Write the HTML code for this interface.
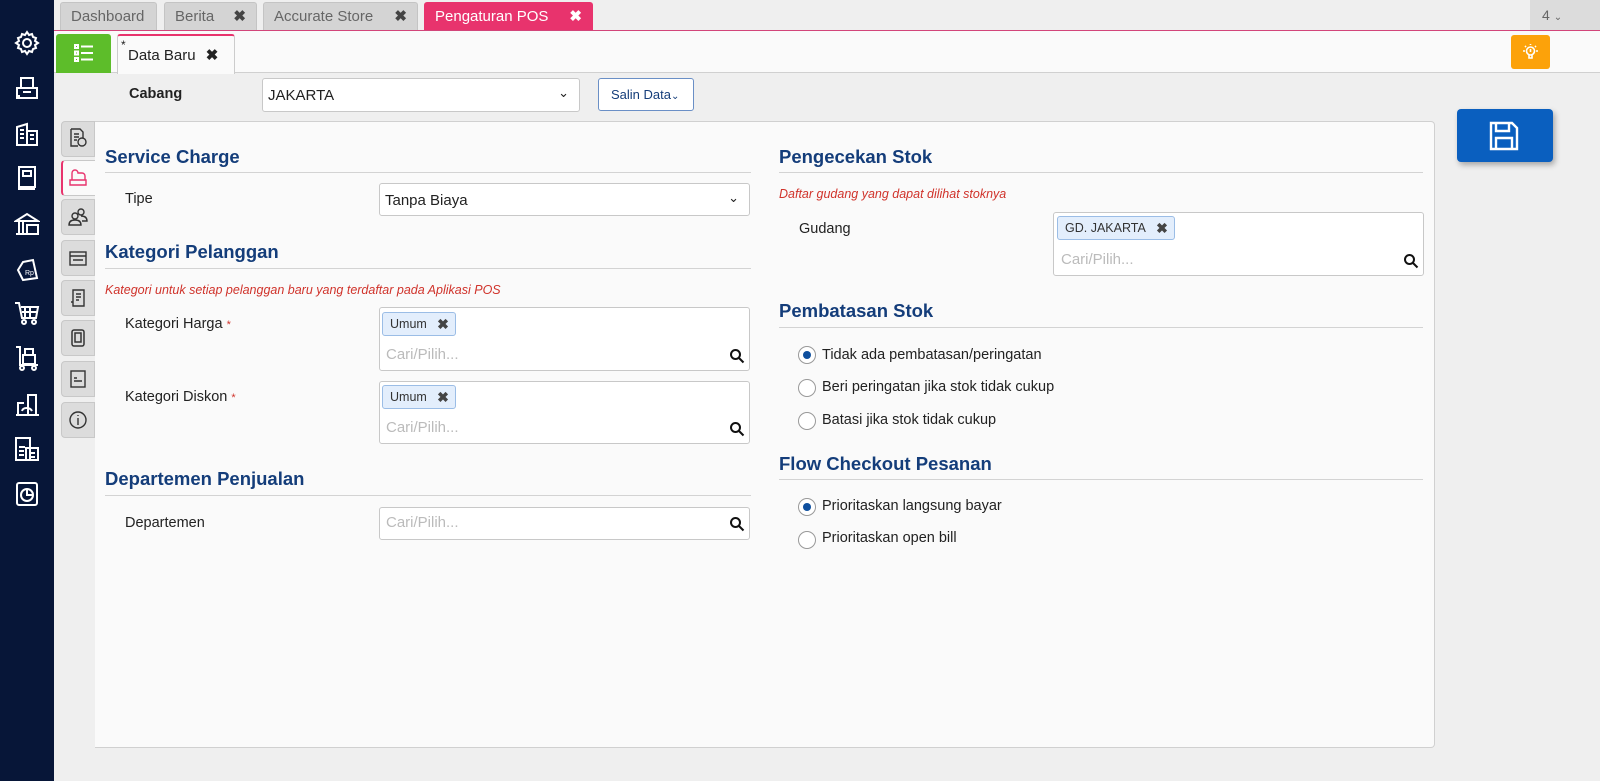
<!DOCTYPE html>
<html><head><meta charset="utf-8"><style>
*{box-sizing:border-box;margin:0;padding:0}
body{width:1600px;height:781px;overflow:hidden;background:#efefef;font-family:"Liberation Sans",sans-serif;position:relative;color:#222}
.a{position:absolute}
#side{left:0;top:0;width:54px;height:781px;background:#071638}
.si{position:absolute;left:14px;width:26px;height:26px}
.tab{position:absolute;top:2px;height:28px;background:#d4d4d4;border:1px solid #c4c4c4;border-bottom:none;border-radius:3px 3px 0 0;color:#666;font-size:15px;line-height:28px;padding-left:10px}
.x{position:absolute;right:10px;top:0;font-weight:bold;color:#444;font-size:15px}
.h{position:absolute;color:#143d7a;font-size:18.5px;font-weight:bold}
.hr{position:absolute;height:1px;background:#d3d3d3}
.lbl{position:absolute;font-size:14.5px;color:#222}
.inp{position:absolute;background:#fff;border:1px solid #c8c8c8;border-radius:3px}
.ph{position:absolute;color:#bbb;font-size:15px}
.chip{position:absolute;background:#e3eefc;border:1px solid #9bbde6;border-radius:3px;font-size:12.5px;color:#333;height:24px;line-height:22px;padding:0 28px 0 7px}
.chip b{position:absolute;right:6px;top:0;color:#444;font-size:14px}
.note{position:absolute;color:#d0332b;font-style:italic;font-size:12.5px}
.vt{position:absolute;left:61px;width:34px;height:36px;background:#dcdcdc;border:1px solid #c8c8c8;border-radius:4px 0 0 4px}
.rad{position:absolute;width:18px;height:18px;border:1px solid #999;border-radius:50%;background:#fff}
.rad.on::after{content:"";position:absolute;left:4px;top:4px;width:8px;height:8px;border-radius:50%;background:#0e4f9e}
.rl{position:absolute;font-size:14.5px;color:#222}
.mag{position:absolute;width:16px;height:16px}
</style></head><body>
<div id="side" class="a">
<svg class="si" style="top:30px" viewBox="0 0 26 26" fill="none" stroke="#fff" stroke-width="2"><circle cx="13" cy="13" r="4"/><path d="M13 2l2 3 3-1 1 3 3 1-1 3 3 2-3 2 1 3-3 1-1 3-3-1-2 3-2-3-3 1-1-3-3-1 1-3-3-2 3-2-1-3 3-1 1-3 3 1z"/></svg>
<svg class="si" style="top:75px" viewBox="0 0 26 26" fill="none" stroke="#fff" stroke-width="2"><rect x="3" y="13" width="20" height="10"/><rect x="7" y="3" width="12" height="10"/><path d="M9 17h8M5 23v-3"/></svg>
<svg class="si" style="top:121px" viewBox="0 0 26 26" fill="none" stroke="#fff" stroke-width="2"><path d="M3 24V6l10-3v21M13 10h10v14M2 24h22M6 9h4M6 13h4M6 17h4M16 14h4M16 18h4"/></svg>
<svg class="si" style="top:165px" viewBox="0 0 26 26" fill="none" stroke="#fff" stroke-width="2"><rect x="5" y="2" width="16" height="20"/><path d="M5 22v2h16M9 6h8v5H9z"/></svg>
<svg class="si" style="top:211px" viewBox="0 0 26 26" fill="none" stroke="#fff" stroke-width="2"><path d="M2 10l11-7 11 7zM5 10v12M9 10v12M2 23h12"/><rect x="13" y="14" width="11" height="9"/></svg>
<svg class="si" style="top:256px" viewBox="0 0 26 26" fill="none" stroke="#fff" stroke-width="2"><path d="M9 6l10-2 4 18-14 2-5-10z"/><text x="11" y="19" font-size="7" fill="#fff" stroke="none">Rp</text></svg>
<svg class="si" style="top:300px" viewBox="0 0 26 26" fill="none" stroke="#fff" stroke-width="2"><path d="M1 3h4l3 15h14l2-11H7M11 8v10M16 8v10M8 12h15"/><circle cx="10" cy="22" r="2"/><circle cx="20" cy="22" r="2"/></svg>
<svg class="si" style="top:345px" viewBox="0 0 26 26" fill="none" stroke="#fff" stroke-width="2"><path d="M2 2h4v18h18"/><rect x="9" y="10" width="12" height="9"/><rect x="11" y="4" width="8" height="6"/><circle cx="8" cy="23" r="2"/><circle cx="20" cy="23" r="2"/></svg>
<svg class="si" style="top:391px" viewBox="0 0 26 26" fill="none" stroke="#fff" stroke-width="2"><path d="M2 24h23M4 24V12h6M14 24V4h8v20M8 20c1-4 8-4 10 0"/></svg>
<svg class="si" style="top:436px" viewBox="0 0 26 26" fill="none" stroke="#fff" stroke-width="2"><rect x="2" y="2" width="14" height="22"/><rect x="12" y="12" width="12" height="12"/><path d="M5 11h6M5 15h5M5 19h5M15 17h6M15 21h6"/></svg>
<svg class="si" style="top:481px" viewBox="0 0 26 26" fill="none" stroke="#fff" stroke-width="2"><rect x="3" y="2" width="20" height="22" rx="2"/><circle cx="13" cy="14" r="6"/><path d="M13 8v6h6"/></svg>
</div>
<!-- top tabs -->
<div class="tab" style="left:60px;width:97px">Dashboard</div>
<div class="tab" style="left:164px;width:93px">Berita<span class="x">✖</span></div>
<div class="tab" style="left:263px;width:155px">Accurate Store<span class="x">✖</span></div>
<div class="tab" style="left:424px;width:169px;background:#e8336d;border-color:#e8336d;color:#fff">Pengaturan POS<span class="x" style="color:#fff">✖</span></div>
<div class="a" style="left:1530px;top:0;width:70px;height:31px;background:#dcdcdc;color:#666;font-size:14px;line-height:31px;padding-left:12px">4 <span style="font-size:10px">⌄</span></div>
<div class="a" style="left:54px;top:30px;width:1546px;height:1px;background:#d2457a"></div>
<div class="a" style="left:54px;top:31px;width:1546px;height:42px;background:#fafafa;border-bottom:1px solid #d0d0d0"></div>
<div class="a" style="left:56px;top:34px;width:55px;height:39px;background:#5dbd2a;border-radius:3px 3px 0 0"></div>
<svg class="a" style="left:74px;top:44px" width="20" height="18" viewBox="0 0 20 18" fill="none" stroke="#fff" stroke-width="2"><rect x="1" y="1" width="3" height="3"/><rect x="1" y="7.5" width="3" height="3"/><rect x="1" y="14" width="3" height="3"/><path d="M7 2.5h12M7 9h12M7 15.5h12"/></svg>
<div class="a" style="left:117px;top:34px;width:118px;height:40px;background:#fafafa;border:1px solid #ccc;border-top:2px solid #e8336d;border-bottom:none;border-radius:3px 3px 0 0;font-size:15px;padding:10px 0 0 10px">Data Baru <b style="margin-left:6px">✖</b><span class="a" style="left:3px;top:2px;font-size:12px">*</span></div>
<div class="a" style="left:1511px;top:35px;width:39px;height:34px;background:#fca20a;border-radius:3px"></div>
<svg class="a" style="left:1522px;top:43px" width="17" height="18" viewBox="0 0 17 18" fill="none" stroke="#fff" stroke-width="1.6"><circle cx="8.5" cy="8" r="4"/><path d="M7 12v3h3v-3M8.5 6v3M1 8h2M14 8h2M3 3l1 1M14 3l-1 1M8.5 1v1"/></svg>
<!-- cabang -->
<div class="lbl" style="left:129px;top:86px;font-weight:bold">Cabang</div>
<div class="inp" style="left:262px;top:78px;width:318px;height:34px;font-size:15px;padding:8px 0 0 5px">JAKARTA<span class="a" style="right:10px;top:6px;font-size:13px">⌄</span></div>
<div class="inp" style="left:598px;top:78px;width:96px;height:33px;border-color:#6a8fc6;color:#143d7a;font-size:13px;padding:8px 0 0 12px">Salin Data<span style="font-size:10px">⌄</span></div>
<!-- save -->
<div class="a" style="left:1457px;top:109px;width:96px;height:53px;background:#0a5fbf;border-radius:4px;box-shadow:2px 3px 6px rgba(0,0,0,.3)"></div>
<svg class="a" style="left:1488px;top:120px" width="32" height="32" viewBox="0 0 32 32" fill="none" stroke="#fff" stroke-width="2.4"><path d="M3 3h21l5 5v21H3z"/><path d="M8 3v8h13V3M8 29V18h16v11"/></svg>
<!-- vtabs -->
<div class="vt" style="top:121px"></div>
<div class="vt" style="top:160px;background:#fafafa;border-left:2px solid #e8336d;border-right:none"></div>
<div class="vt" style="top:199px"></div>
<div class="vt" style="top:240px"></div>
<div class="vt" style="top:280px"></div>
<div class="vt" style="top:320px"></div>
<div class="vt" style="top:361px"></div>
<div class="vt" style="top:402px"></div>
<svg class="a" style="left:68px;top:128px" width="20" height="20" viewBox="0 0 20 20" fill="none" stroke="#333" stroke-width="1.4"><path d="M3 1h9l3 3v6M3 1v17h7"/><circle cx="14" cy="14" r="4"/><path d="M6 6h5M6 9h5M6 12h3"/></svg>
<svg class="a" style="left:68px;top:168px" width="20" height="20" viewBox="0 0 20 20" fill="none" stroke="#e8336d" stroke-width="1.4"><path d="M4 12V5a3 3 0 0 1 6 0h4a3 3 0 0 1 3 3v4M2 12h16v5H2z"/></svg>
<svg class="a" style="left:68px;top:207px" width="20" height="20" viewBox="0 0 20 20" fill="none" stroke="#333" stroke-width="1.4"><circle cx="7" cy="9" r="3"/><circle cx="13" cy="5" r="3"/><path d="M1 18c0-4 3-5 6-5s6 1 6 5zM13 9c3 0 6 1 6 5h-5"/></svg>
<svg class="a" style="left:68px;top:248px" width="20" height="20" viewBox="0 0 20 20" fill="none" stroke="#333" stroke-width="1.4"><rect x="2" y="4" width="16" height="13"/><path d="M2 8h16M5 12h10"/></svg>
<svg class="a" style="left:68px;top:288px" width="20" height="20" viewBox="0 0 20 20" fill="none" stroke="#333" stroke-width="1.4"><path d="M5 2h11v16H5zM3 14h2M8 6h5M8 9h5M8 12h3"/></svg>
<svg class="a" style="left:68px;top:328px" width="20" height="20" viewBox="0 0 20 20" fill="none" stroke="#333" stroke-width="1.5"><rect x="4" y="2" width="12" height="16" rx="2"/><path d="M7 5h6v9H7z"/></svg>
<svg class="a" style="left:68px;top:369px" width="20" height="20" viewBox="0 0 20 20" fill="none" stroke="#333" stroke-width="1.4"><rect x="3" y="2" width="14" height="16"/><path d="M6 12h8M6 9h3"/></svg>
<svg class="a" style="left:68px;top:410px" width="20" height="20" viewBox="0 0 20 20" fill="none" stroke="#333" stroke-width="1.4"><circle cx="10" cy="10" r="8"/><path d="M10 8v7M10 5v1"/></svg>
<!-- panel -->
<div class="a" style="left:95px;top:121px;width:1340px;height:627px;background:#fafafa;border:1px solid #d0d0d0;border-left:none;border-radius:0 4px 4px 0"></div>
<!-- left column -->
<div class="h" style="left:105px;top:146px">Service Charge</div>
<div class="hr" style="left:105px;top:172px;width:646px"></div>
<div class="lbl" style="left:125px;top:191px">Tipe</div>
<div class="inp" style="left:379px;top:183px;width:371px;height:33px;font-size:15px;padding:8px 0 0 5px">Tanpa Biaya<span class="a" style="right:10px;top:6px;font-size:13px">⌄</span></div>
<div class="h" style="left:105px;top:241px">Kategori Pelanggan</div>
<div class="hr" style="left:105px;top:268px;width:646px"></div>
<div class="note" style="left:105px;top:283px">Kategori untuk setiap pelanggan baru yang terdaftar pada Aplikasi POS</div>
<div class="lbl" style="left:125px;top:316px">Kategori Harga <span style="color:#d0332b;font-size:11px">*</span></div>
<div class="inp" style="left:379px;top:307px;width:371px;height:64px"></div>
<div class="chip" style="left:382px;top:312px">Umum<b>✖</b></div>
<div class="ph" style="left:386px;top:346px">Cari/Pilih...</div>
<svg class="mag" style="left:729px;top:348px" viewBox="0 0 16 16" fill="none" stroke="#111" stroke-width="2"><circle cx="6.5" cy="6.5" r="4.5"/><path d="M10 10l4.5 4.5"/></svg>
<div class="lbl" style="left:125px;top:389px">Kategori Diskon <span style="color:#d0332b;font-size:11px">*</span></div>
<div class="inp" style="left:379px;top:381px;width:371px;height:63px"></div>
<div class="chip" style="left:382px;top:385px">Umum<b>✖</b></div>
<div class="ph" style="left:386px;top:419px">Cari/Pilih...</div>
<svg class="mag" style="left:729px;top:421px" viewBox="0 0 16 16" fill="none" stroke="#111" stroke-width="2"><circle cx="6.5" cy="6.5" r="4.5"/><path d="M10 10l4.5 4.5"/></svg>
<div class="h" style="left:105px;top:468px">Departemen Penjualan</div>
<div class="hr" style="left:105px;top:495px;width:646px"></div>
<div class="lbl" style="left:125px;top:515px">Departemen</div>
<div class="inp" style="left:379px;top:507px;width:371px;height:33px"></div>
<div class="ph" style="left:386px;top:514px">Cari/Pilih...</div>
<svg class="mag" style="left:729px;top:516px" viewBox="0 0 16 16" fill="none" stroke="#111" stroke-width="2"><circle cx="6.5" cy="6.5" r="4.5"/><path d="M10 10l4.5 4.5"/></svg>
<!-- right column -->
<div class="h" style="left:779px;top:146px">Pengecekan Stok</div>
<div class="hr" style="left:779px;top:172px;width:644px"></div>
<div class="note" style="left:779px;top:187px">Daftar gudang yang dapat dilihat stoknya</div>
<div class="lbl" style="left:799px;top:221px">Gudang</div>
<div class="inp" style="left:1053px;top:212px;width:371px;height:64px"></div>
<div class="chip" style="left:1057px;top:216px">GD. JAKARTA<b>✖</b></div>
<div class="ph" style="left:1061px;top:251px">Cari/Pilih...</div>
<svg class="mag" style="left:1403px;top:253px" viewBox="0 0 16 16" fill="none" stroke="#111" stroke-width="2"><circle cx="6.5" cy="6.5" r="4.5"/><path d="M10 10l4.5 4.5"/></svg>
<div class="h" style="left:779px;top:300px">Pembatasan Stok</div>
<div class="hr" style="left:779px;top:327px;width:644px"></div>
<div class="rad on" style="left:798px;top:346px"></div><div class="rl" style="left:822px;top:347px">Tidak ada pembatasan/peringatan</div>
<div class="rad" style="left:798px;top:379px"></div><div class="rl" style="left:822px;top:379px">Beri peringatan jika stok tidak cukup</div>
<div class="rad" style="left:798px;top:412px"></div><div class="rl" style="left:822px;top:412px">Batasi jika stok tidak cukup</div>
<div class="h" style="left:779px;top:453px">Flow Checkout Pesanan</div>
<div class="hr" style="left:779px;top:479px;width:644px"></div>
<div class="rad on" style="left:798px;top:498px"></div><div class="rl" style="left:822px;top:498px">Prioritaskan langsung bayar</div>
<div class="rad" style="left:798px;top:531px"></div><div class="rl" style="left:822px;top:530px">Prioritaskan open bill</div>
</body></html>
